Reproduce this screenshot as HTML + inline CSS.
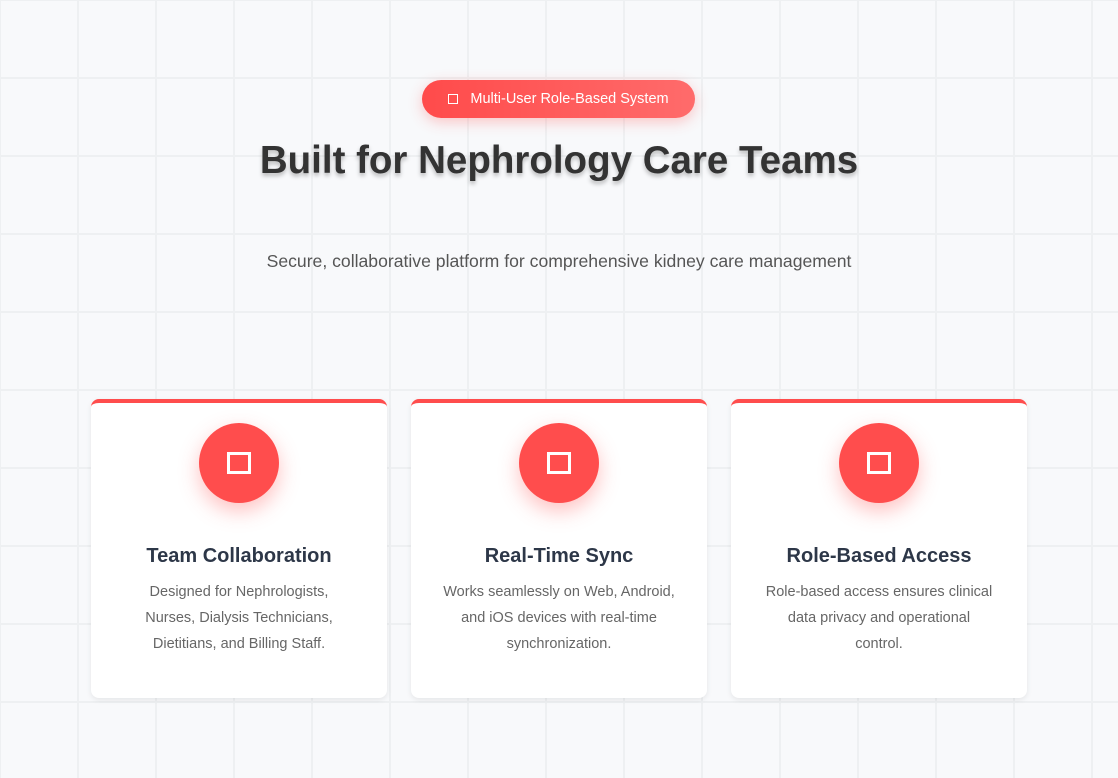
<!DOCTYPE html>
<html><head><style>
*{margin:0;padding:0;box-sizing:border-box}
body{width:1118px;height:778px;overflow:hidden;font-family:"Liberation Sans",sans-serif;background-color:#f8f9fb;
background-image:linear-gradient(#eef0f2 2px,transparent 2px),linear-gradient(90deg,#eef0f2 2px,transparent 2px);
background-size:78px 78px;background-position:-1px -1px;position:relative}
.badge{position:absolute;left:422px;top:80px;width:273px;height:38px;border-radius:19px;background:linear-gradient(90deg,#ff4b4b,#ff6b6b);box-shadow:0 4px 14px rgba(255,77,77,.3);color:#fff;font-size:14.5px;display:flex;align-items:center;justify-content:center;gap:12px}
.badge i{width:10px;height:10px;border:1.5px solid #fff;display:inline-block}
h1{position:absolute;left:0;right:0;top:139px;text-align:center;font-size:38.5px;font-weight:bold;color:#333;text-shadow:0 3px 4px rgba(0,0,0,.25)}
.sub{position:absolute;left:0;right:0;top:251px;text-align:center;font-size:17.6px;color:#555}
.card{position:absolute;top:399px;width:296px;height:299px;background:#fff;border-radius:8px;border-top:4px solid #ff4d4d;box-shadow:0 2px 6px rgba(0,0,0,.08);text-align:center}
.c{position:absolute;left:108px;top:20px;width:80px;height:80px;border-radius:50%;background:#ff4d4d;box-shadow:0 8px 20px rgba(255,77,77,.35);display:flex;align-items:center;justify-content:center}
.c i{width:24px;height:22px;border:3px solid #fff}
.card h3{position:absolute;left:0;right:0;top:142px;font-size:20px;color:#2d3748}
.card p{position:absolute;left:18px;right:18px;top:176px;font-size:14.5px;line-height:26px;color:#666}
</style></head><body>
<div class="badge"><i></i>Multi-User Role-Based System</div>
<h1>Built for Nephrology Care Teams</h1>
<div class="sub">Secure, collaborative platform for comprehensive kidney care management</div>
<div class="card" style="left:91px"><div class="c"><i></i></div><h3>Team Collaboration</h3><p>Designed for Nephrologists,<br>Nurses, Dialysis Technicians,<br>Dietitians, and Billing Staff.</p></div>
<div class="card" style="left:411px"><div class="c"><i></i></div><h3>Real-Time Sync</h3><p>Works seamlessly on Web, Android,<br>and iOS devices with real-time<br>synchronization.</p></div>
<div class="card" style="left:731px"><div class="c"><i></i></div><h3>Role-Based Access</h3><p>Role-based access ensures clinical<br>data privacy and operational<br>control.</p></div>
</body></html>
